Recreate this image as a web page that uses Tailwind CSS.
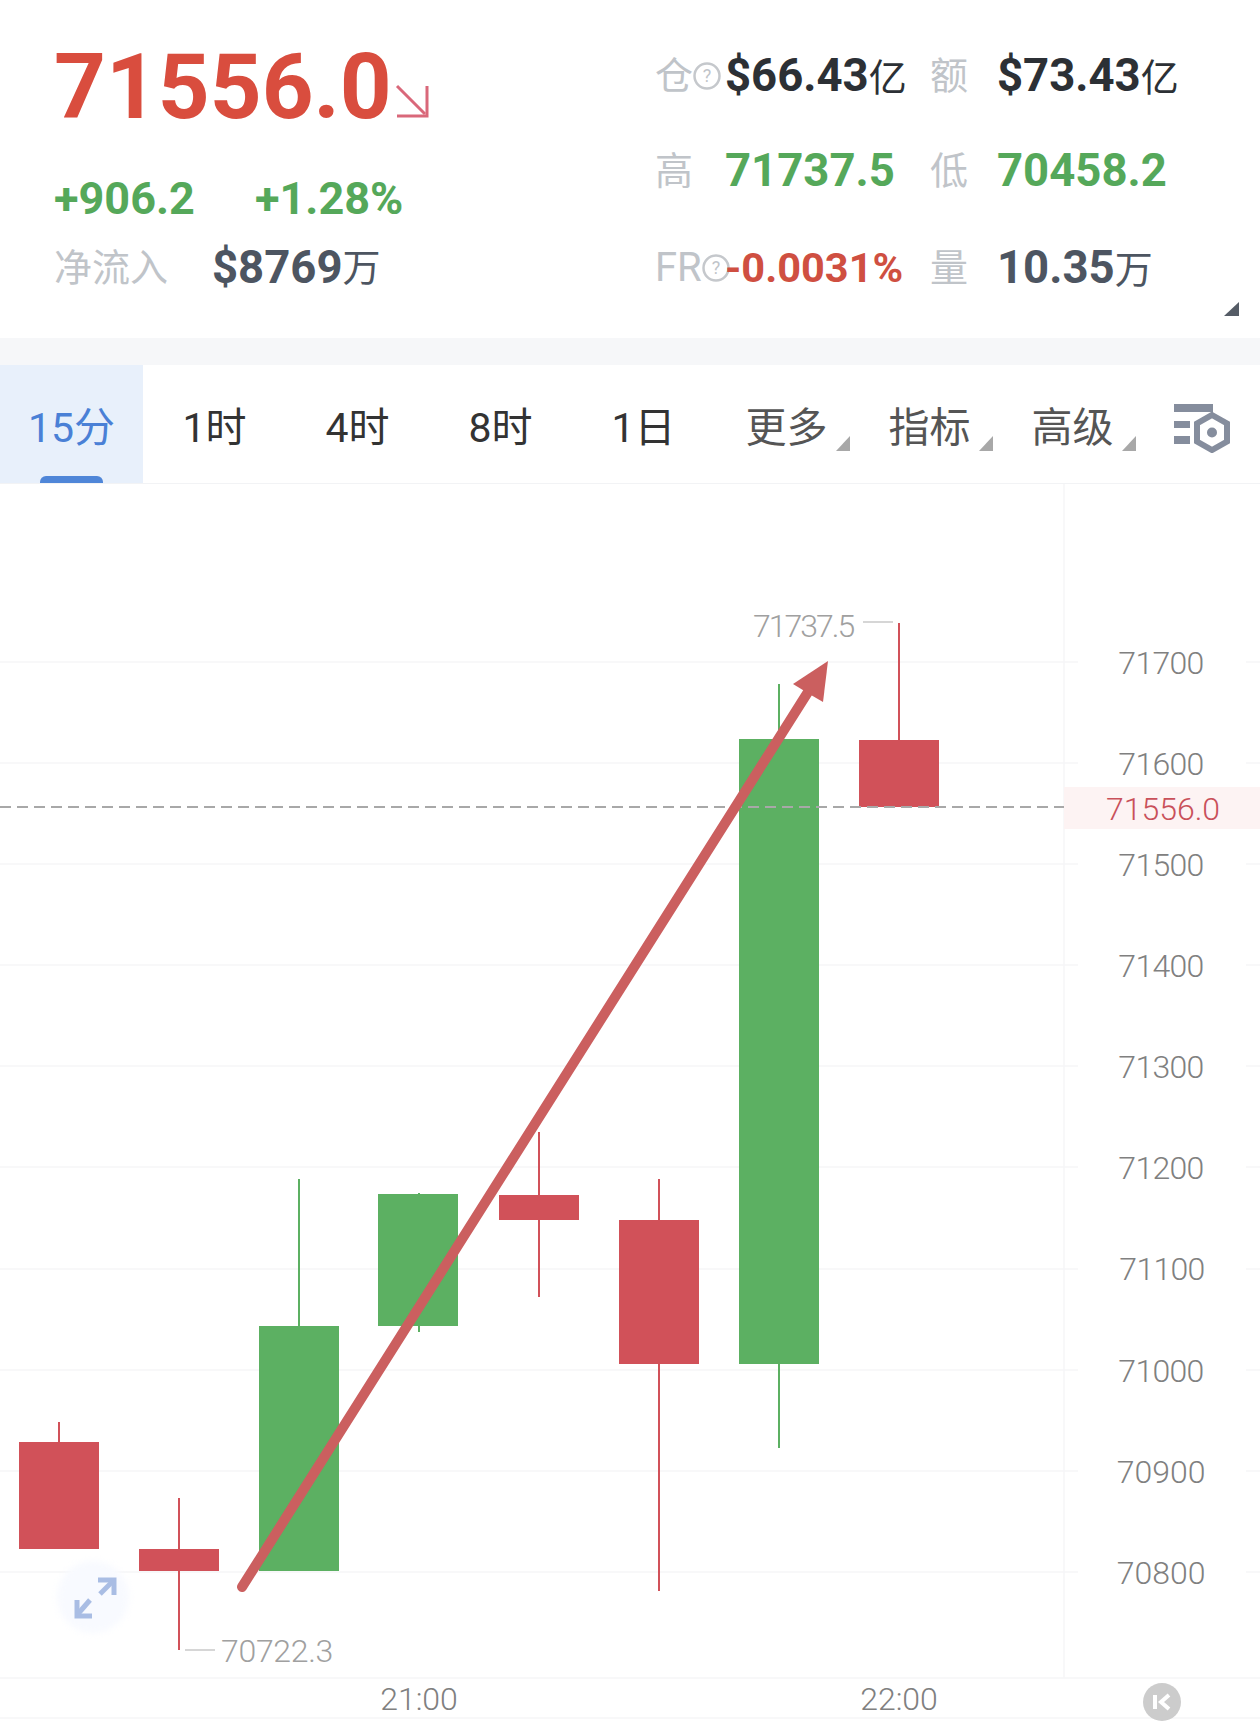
<!DOCTYPE html>
<html lang="en">
<head>
  <meta charset="UTF-8" />
  <title>71556.0</title>
  <script src="https://cdn.jsdelivr.net/npm/@tailwindcss/browser@4"></script>
</head>
<body class="bg-white font-['Roboto','Noto_Sans_CJK_SC',sans-serif]">
  <div class="w-[1260px] h-[1724px] overflow-hidden flex flex-col">

    <!-- Quote header -->
    <div class="relative h-[338px] flex">
      <div class="w-[655px] pl-[54px] pt-[28px]">
        <div class="flex items-end h-[118px]">
          <span class="text-[90.5px] leading-[118px] font-bold text-[#d94d3e]">71556.0</span>
          <svg class="ml-[3px] mb-[28px]" width="34" height="34" viewBox="0 0 34 34" fill="none" stroke="#d9687a" stroke-width="3"><path d="M2 2 L30 30"/><path d="M32 2 V32 H2"/></svg>
        </div>
        <div class="flex items-center h-[50px] mt-[27px] text-[45px] leading-none font-bold text-[#55a85a]">
          <span class="w-[201px]">+906.2</span>
          <span>+1.28%</span>
        </div>
        <div class="flex items-center h-[50px] mt-[20px]">
          <span class="w-[158px] text-[38px] leading-none text-[#c0c4c9]">净流入</span>
          <span class="text-[45.5px] leading-none font-bold text-[#4d5561]">$8769</span><span class="text-[38px] leading-none text-[#4d5561]">万</span>
        </div>
      </div>

      <div class="pt-[27px] grid grid-cols-[70px_205px_67px_1fr] grid-rows-[97px_93px_101px] items-center flex-1 text-[45.5px] leading-none font-bold">
        <div class="flex items-center text-[38px] font-normal text-[#c0c4c9]">仓<svg class="shrink-0" width="28" height="28" viewBox="0 0 28 28" fill="none"><circle cx="14" cy="14" r="12.5" stroke="#c5c8cc" stroke-width="2.5"/><text x="14" y="20" text-anchor="middle" class="text-[18px]" fill="#c0c4c9">?</text></svg></div>
        <div class="text-[#2c3035]">$66.43<span class="text-[38px] font-normal">亿</span></div>
        <div class="text-[38px] font-normal text-[#c0c4c9]">额</div>
        <div class="text-[#2c3035]">$73.43<span class="text-[38px] font-normal">亿</span></div>

        <div class="text-[38px] font-normal text-[#c0c4c9]">高</div>
        <div class="text-[#55a85a]">71737.5</div>
        <div class="text-[38px] font-normal text-[#c0c4c9]">低</div>
        <div class="text-[#55a85a]">70458.2</div>

        <div class="flex items-center text-[40px] font-normal text-[#c0c4c9]">FR<svg class="shrink-0" width="28" height="28" viewBox="0 0 28 28" fill="none"><circle cx="14" cy="14" r="12.5" stroke="#c5c8cc" stroke-width="2.5"/><text x="14" y="20" text-anchor="middle" class="text-[18px]" fill="#c0c4c9">?</text></svg></div>
        <div class="text-[41.5px] text-[#cf4f41]">-0.0031%</div>
        <div class="text-[38px] font-normal text-[#c0c4c9]">量</div>
        <div class="text-[#4d5561]">10.35<span class="text-[38px] font-normal">万</span></div>
      </div>

      <svg class="absolute left-[1224px] top-[302px]" width="15" height="14" viewBox="0 0 15 14"><polygon points="15,0 15,14 0,14" fill="#555c66"/></svg>
    </div>

    <div class="h-[27px] bg-[#f6f7f9]"></div>

    <!-- Period tabs -->
    <div class="h-[119px] flex items-center text-[41px] leading-none text-[#333333] border-b border-[#f2f3f5]">
      <div class="relative w-[143px] h-full flex items-center justify-center pt-[8px] bg-[#e8f0fb] text-[#4a80d6]">
        15分
        <span class="absolute left-[40px] bottom-0 w-[63px] h-[7px] rounded-t-[6px] bg-[#4f86d8]"></span>
      </div>
      <div class="w-[143px] text-center pt-[8px]">1时</div>
      <div class="w-[143px] text-center pt-[8px]">4时</div>
      <div class="w-[143px] text-center pt-[8px]">8时</div>
      <div class="w-[143px] text-center pt-[8px]">1日</div>
      <div class="relative w-[143px] text-center pt-[8px] text-[#555555]">更多<svg class="absolute left-[121px] top-[36px]" width="14" height="15" viewBox="0 0 14 15"><polygon points="14,0 14,15 0,15" fill="#a8a8a8"/></svg></div>
      <div class="relative w-[143px] text-center pt-[8px] text-[#555555]">指标<svg class="absolute left-[121px] top-[36px]" width="14" height="15" viewBox="0 0 14 15"><polygon points="14,0 14,15 0,15" fill="#a8a8a8"/></svg></div>
      <div class="relative w-[143px] text-center pt-[8px] text-[#555555]">高级<svg class="absolute left-[121px] top-[36px]" width="14" height="15" viewBox="0 0 14 15"><polygon points="14,0 14,15 0,15" fill="#a8a8a8"/></svg></div>
      <svg class="ml-[29px] mt-[7px]" width="58" height="50" viewBox="0 0 58 50" fill="#858d9d">
        <rect x="1" y="1" width="39" height="8"/>
        <rect x="1" y="18" width="16" height="7"/>
        <rect x="1" y="33" width="16" height="8"/>
        <polygon points="39,12 54,20.5 54,38.5 39,47 24,38.5 24,20.5" fill="none" stroke="#858d9d" stroke-width="6"/>
        <circle cx="39" cy="29.5" r="5"/>
      </svg>
    </div>

    <!-- Chart canvas, drawn in page coordinates -->
    <svg class="block" width="1260" height="1240" viewBox="0 484 1260 1240">
      <g stroke="#f6f6f7" stroke-width="1.5">
        <path d="M0 662H1078M1246 662H1260"/>
        <path d="M0 763H1078M1246 763H1260"/>
        <path d="M0 864H1078M1246 864H1260"/>
        <path d="M0 965H1078M1246 965H1260"/>
        <path d="M0 1066H1078M1246 1066H1260"/>
        <path d="M0 1167H1078M1246 1167H1260"/>
        <path d="M0 1269H1078M1246 1269H1260"/>
        <path d="M0 1370H1078M1246 1370H1260"/>
        <path d="M0 1471H1078M1246 1471H1260"/>
        <path d="M0 1572H1078M1246 1572H1260"/>
        <path d="M1064 484V1678"/>
        <path d="M0 1678H1260M0 1718H1260"/>
      </g>

      <rect x="1064" y="787" width="196" height="42" fill="#fdf3f3"/>

      <!-- candles -->
      <g fill="#d15159">
        <rect x="58" y="1422" width="2" height="20"/>
        <rect x="19" y="1442" width="80" height="107"/>
        <rect x="178" y="1498" width="2" height="152"/>
        <rect x="139" y="1549" width="80" height="22"/>
        <rect x="538" y="1132" width="2" height="165"/>
        <rect x="499" y="1195" width="80" height="25"/>
        <rect x="658" y="1179" width="2" height="412"/>
        <rect x="619" y="1220" width="80" height="144"/>
        <rect x="898" y="623" width="2" height="117"/>
        <rect x="859" y="740" width="80" height="67"/>
      </g>
      <g fill="#5cb062">
        <rect x="298" y="1179" width="2" height="147"/>
        <rect x="259" y="1326" width="80" height="245"/>
        <rect x="418" y="1193" width="2" height="139"/>
        <rect x="378" y="1194" width="80" height="132"/>
        <rect x="778" y="684" width="2" height="764"/>
        <rect x="739" y="739" width="80" height="625"/>
      </g>

      <path d="M0 807H1064" stroke="#a8a8a8" stroke-width="2" stroke-dasharray="11 6"/>

      <!-- drawn trend arrow -->
      <path d="M242 1587 L808 692" stroke="#cb5f5f" stroke-width="10" stroke-linecap="round"/>
      <polygon points="828,661 793,684 811,695 823,702" fill="#cb5f5f"/>

      <!-- high / low marks -->
      <path d="M863 622H893" stroke="#c8c8c8" stroke-width="1.5"/>
      <path d="M185 1650H215" stroke="#c8c8c8" stroke-width="1.5"/>
      <g class="text-[32px] font-light" fill="#a0a0a0">
        <text x="753" y="637" class="tracking-[-2px]">71737.5</text>
        <text x="221" y="1662" class="tracking-[-0.3px]">70722.3</text>
      </g>

      <!-- price axis -->
      <g class="text-[32px] font-light tracking-[-0.7px]" fill="#808080" text-anchor="middle">
        <text x="1161" y="674">71700</text>
        <text x="1161" y="775">71600</text>
        <text x="1163" y="820" fill="#c9505a" class="tracking-normal">71556.0</text>
        <text x="1161" y="876">71500</text>
        <text x="1161" y="977">71400</text>
        <text x="1161" y="1078">71300</text>
        <text x="1161" y="1179">71200</text>
        <text x="1162" y="1280">71100</text>
        <text x="1161" y="1382">71000</text>
        <text x="1161" y="1483" class="tracking-normal">70900</text>
        <text x="1161" y="1584" class="tracking-normal">70800</text>
        <text x="419" y="1710" class="tracking-normal">21:00</text>
        <text x="899" y="1710" class="tracking-normal">22:00</text>
      </g>

      <!-- fullscreen button -->
      <circle cx="93" cy="1597" r="36" fill="#f8faff" class="blur-[3px]"/>
      <g fill="none" stroke="#a9bde4" stroke-width="5">
        <path d="M100 1594 L114 1580"/>
        <path d="M98 1580 H114 V1595"/>
        <path d="M90 1600 L77 1615"/>
        <path d="M77 1600 V1616 H92"/>
      </g>

      <!-- collapse button -->
      <circle cx="1162" cy="1702" r="19" fill="#cccccc"/>
      <path d="M1155 1695V1709" stroke="#ffffff" stroke-width="4"/>
      <path d="M1169 1695L1161 1702L1169 1709" fill="none" stroke="#ffffff" stroke-width="4"/>
    </svg>
  </div>
</body>
</html>
